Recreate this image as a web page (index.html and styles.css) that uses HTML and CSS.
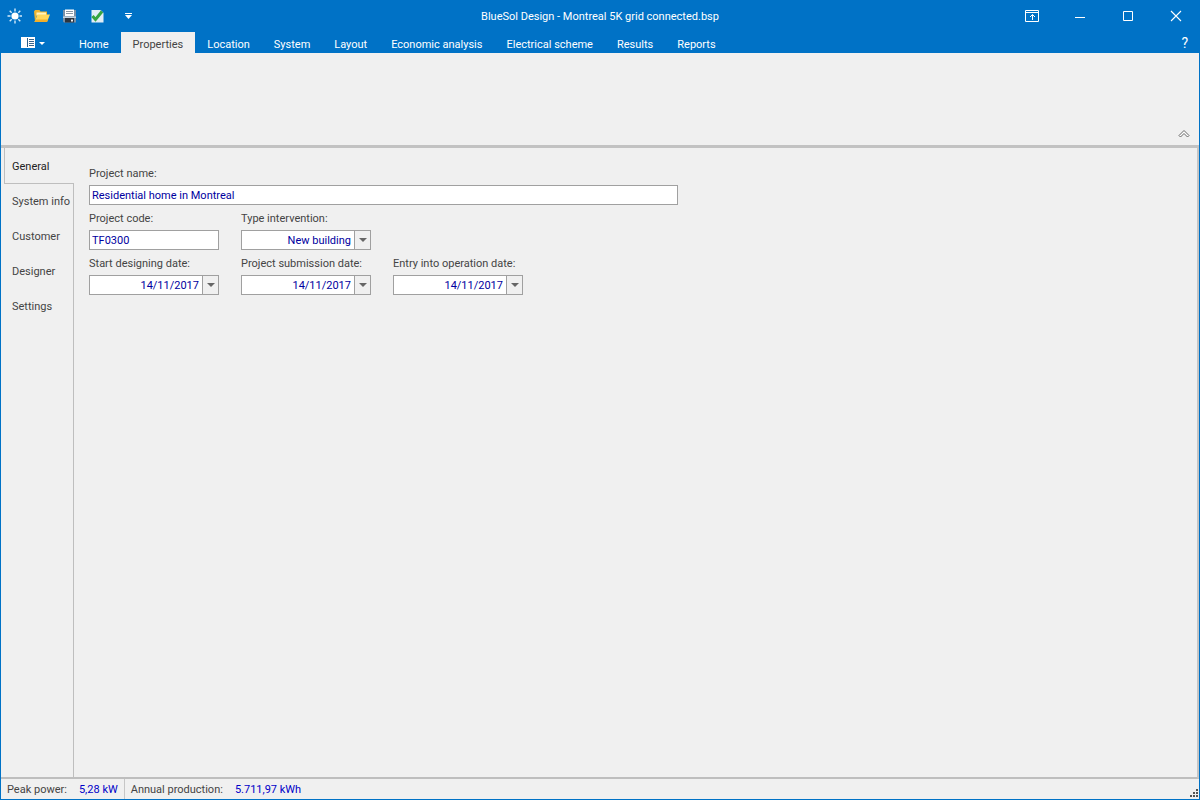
FILE: index.html
```html
<!DOCTYPE html>
<html lang="en">
<head>
    <meta charset="UTF-8">
    <meta name="viewport" content="width=device-width, initial-scale=1.0">
    <title>BlueSol Design - Montreal 5K grid connected.bsp</title>
    <link rel="stylesheet" href="styles.css">
</head>
<body>
    <div class="window">
        <header class="title-bar">
            <div class="quick-access">
                <svg class="icon" viewBox="0 0 16 16" width="16" height="16" aria-hidden="true">
                    <circle cx="9" cy="8" r="3.6" fill="#fff"/>
                    <path d="M9 .5v3M9 12.500v3M1.500 8h3M13.500 8h2.500M3.700 2.700l2 2M12.300 11.300l2 2M3.700 13.300l2-2M12.300 4.700l2-2" stroke="#d3eafa" stroke-width="1.4"/>
                </svg>
                <button class="quick-btn" aria-label="Open">
                    <svg viewBox="0 0 16 16" width="16" height="16">
                        <path d="M0 3.500 1 2h4.500l1 1.500h6.500V7H3L1 13z" fill="#efb52f"/>
                        <path d="M2.500 4.500h9.500v3H2.500z" fill="#fff3c0"/>
                        <path d="M3.500 6.500H16L13 14H.5z" fill="#ffd75a"/>
                        <path d="M.5 14H13l1-2.500H1.500z" fill="#f2ae28"/>
                    </svg>
                </button>
                <button class="quick-btn" aria-label="Save">
                    <svg viewBox="0 0 16 16" width="16" height="16">
                        <path d="M1 2h13v12.500H2l-1-1z" fill="#7890a8"/>
                        <path d="M3 1.500h9V8H3z" fill="#fff"/>
                        <path d="M4 3.500h7M4 5.500h7" stroke="#8796a4"/>
                        <path d="M1 8.500h13v1.500H1z" fill="#c2d2df"/>
                        <path d="M3 10h9v4.500H3z" fill="#2c343e"/>
                        <path d="M9 11.500h2v2H9z" fill="#eee"/>
                    </svg>
                </button>
                <button class="quick-btn" aria-label="Validate">
                    <svg viewBox="0 0 16 16" width="16" height="16">
                        <path d="M1.500 2h9l3 3v9.500h-12z" fill="#e1edf6"/>
                        <path d="M10.500 2v3h3z" fill="#b3c7d7"/>
                        <path d="M2.500 8 5.500 11.500 12 3.500" fill="none" stroke="#36a541" stroke-width="3"/>
                    </svg>
                </button>
                <button class="quick-btn" aria-label="Customize quick access toolbar">
                    <svg viewBox="0 0 16 16" width="16" height="16">
                        <path d="M7 5.500h7" stroke="#fff"/>
                        <path d="M7 7h7l-3.500 4z" fill="#fff"/>
                    </svg>
                </button>
            </div>
            <h1 class="title">BlueSol Design - Montreal 5K grid connected.bsp</h1>
            <div class="window-controls">
                <button class="window-btn" aria-label="Ribbon display options">
                    <svg viewBox="0 0 14 12" width="14" height="12">
                        <path d="M.5.5h13v11H.5zM1 2.500h12M7.500 10V4.500M5 7l2.500-2.500L10 7" fill="none" stroke="#fff"/>
                    </svg>
                </button>
                <button class="window-btn" aria-label="Minimize">
                    <svg viewBox="0 0 12 12" width="12" height="12">
                        <path d="M1 7.500h10" stroke="#fff"/>
                    </svg>
                </button>
                <button class="window-btn" aria-label="Maximize">
                    <svg viewBox="0 0 12 12" width="12" height="12">
                        <path d="M1.500 1.500h9v9h-9z" fill="none" stroke="#fff"/>
                    </svg>
                </button>
                <button class="window-btn" aria-label="Close">
                    <svg viewBox="0 0 12 12" width="12" height="12">
                        <path d="M1 1l10 10M11 1 1 11" stroke="#fff" stroke-width="1.1"/>
                    </svg>
                </button>
            </div>
        </header>

        <nav class="ribbon-tabs">
            <button class="app-menu" aria-label="Application menu">
                <svg viewBox="0 0 24 12" width="24" height="12">
                    <path d="M0 0h14v11H0z" fill="#fff"/>
                    <path d="M6.500 1v9" stroke="#2a5f8c"/>
                    <path d="M8 2.500h5M8 4.500h5M8 6.500h5M8 8.500h5" stroke="#38658c"/>
                    <path d="M18 5h6l-3 3z" fill="#fff"/>
                </svg>
            </button>
            <button class="tab">Home</button>
            <button class="tab active">Properties</button>
            <button class="tab">Location</button>
            <button class="tab">System</button>
            <button class="tab">Layout</button>
            <button class="tab">Economic analysis</button>
            <button class="tab">Electrical scheme</button>
            <button class="tab">Results</button>
            <button class="tab">Reports</button>
            <button class="help-btn">?</button>
        </nav>

        <section class="ribbon">
            <button class="collapse-btn" aria-label="Collapse ribbon">
                <svg viewBox="0 0 12 9" width="12" height="9">
                    <path d="M1 6.500 6 1.500l5 5-1.500 1.500L6 4.500 2.500 8z" fill="#fff" stroke="#666"/>
                </svg>
            </button>
        </section>

        <main class="workspace">
            <nav class="side-tabs">
                <button class="side-tab active">General</button>
                <button class="side-tab">System info</button>
                <button class="side-tab">Customer</button>
                <button class="side-tab">Designer</button>
                <button class="side-tab">Settings</button>
            </nav>
            <form class="form">
                <div class="field field-wide">
                    <label for="project-name">Project name:</label>
                    <input id="project-name" class="box" type="text" value="Residential home in Montreal">
                </div>
                <div class="field">
                    <label for="project-code">Project code:</label>
                    <input id="project-code" class="box" type="text" value="TF0300">
                </div>
                <div class="field">
                    <label for="type-intervention">Type intervention:</label>
                    <div class="box combo">
                        <select id="type-intervention" class="combo-value">
                            <option>New building</option>
                        </select>
                        <span class="combo-arrow"></span>
                    </div>
                </div>
                <div class="field field-first">
                    <label for="start-date">Start designing date:</label>
                    <div class="box combo">
                        <input id="start-date" class="combo-value" type="text" value="14/11/2017">
                        <button type="button" class="combo-arrow" aria-label="Pick start designing date"></button>
                    </div>
                </div>
                <div class="field">
                    <label for="submission-date">Project submission date:</label>
                    <div class="box combo">
                        <input id="submission-date" class="combo-value" type="text" value="14/11/2017">
                        <button type="button" class="combo-arrow" aria-label="Pick project submission date"></button>
                    </div>
                </div>
                <div class="field">
                    <label for="operation-date">Entry into operation date:</label>
                    <div class="box combo">
                        <input id="operation-date" class="combo-value" type="text" value="14/11/2017">
                        <button type="button" class="combo-arrow" aria-label="Pick entry into operation date"></button>
                    </div>
                </div>
            </form>
        </main>

        <footer class="status-bar">
            <div class="status-item">
                <span>Peak power:</span>
                <span class="status-value">5,28 kW</span>
            </div>
            <div class="status-item">
                <span>Annual production:</span>
                <span class="status-value">5.711,97 kWh</span>
            </div>
            <svg class="grip" viewBox="0 0 8 8" width="8" height="8" aria-hidden="true">
                <path d="M6 0h2v2H6zM3 3h2v2H3zM6 3h2v2H6zM0 6h2v2H0zM3 6h2v2H3zM6 6h2v2H6z" fill="#555"/>
            </svg>
        </footer>
    </div>
</body>
</html>
```

FILE: styles.css
```css
* {
    box-sizing: border-box;
}
body {
    margin: 0;
    font-family: Roboto, Tahoma, sans-serif;
    font-size: 11px;
    line-height: 14px;
    color: #444;
}
button,
input,
select {
    font: inherit;
    color: inherit;
    background: none;
    border: none;
    border-radius: 0;
    margin: 0;
    padding: 0;
}
svg {
    display: block;
}
.window {
    display: flex;
    flex-direction: column;
    min-height: 100vh;
    background: #f0f0f0;
    border: 1px solid #0072c6;
    border-top: none;
}

/* Title bar */
.title-bar {
    display: grid;
    grid-template-columns: 1fr auto 1fr;
    align-items: center;
    height: 32px;
    margin: 0 -1px;
    background: #0072c6;
    color: #fff;
}
.quick-access {
    display: flex;
    gap: 12px;
    padding-left: 6px;
}
.title {
    margin: 0;
    padding-top: 2px;
    font-size: 11px;
    font-weight: normal;
}
.window-controls {
    display: flex;
    justify-content: flex-end;
}
.window-btn {
    display: flex;
    align-items: center;
    justify-content: center;
    width: 48px;
    height: 32px;
}

/* Ribbon */
.ribbon-tabs {
    display: flex;
    height: 21px;
    margin: 0 -1px;
    background: #0072c6;
    color: #fff;
}
.app-menu {
    width: 67px;
    padding-left: 21px;
}
.tab {
    padding: 4px 12px 0;
}
.tab.active {
    background: #f0f0f0;
    color: #444;
}
.help-btn {
    margin-left: auto;
    padding: 0 12px;
    font-size: 14px;
}
.ribbon {
    display: flex;
    align-items: flex-end;
    justify-content: flex-end;
    height: 95px;
    padding: 7px 9px;
    border-bottom: 3px solid #c2c2c2;
}

/* Workspace */
.workspace {
    display: flex;
    flex: 1;
    padding-left: 3px;
    border-right: 2px solid #c6c6c6;
    border-bottom: 2px solid #bebebe;
}
.side-tabs {
    display: flex;
    flex-direction: column;
    width: 70px;
    border-right: 1px solid #bebebe;
}
.side-tab {
    height: 35px;
    padding-left: 8px;
    text-align: left;
    white-space: nowrap;
}
.side-tab.active {
    height: 36px;
    margin-right: -1px;
    background: #f0f0f0;
    border-left: 1px solid #bebebe;
    border-bottom: 1px solid #bebebe;
    padding: 2px 0 0 7px;
    color: #222;
}
.form {
    display: grid;
    grid-template-columns: repeat(3, 130px) 1fr;
    align-content: start;
    gap: 7px 22px;
    padding: 19px 15px;
}
.field {
    display: flex;
    flex-direction: column;
    gap: 4px;
    white-space: nowrap;
}
.field-wide {
    grid-column: 1 / -1;
    width: 589px;
    max-width: 100%;
}
.field-first {
    grid-column: 1;
}
.box {
    width: 100%;
    height: 20px;
    padding: 0 2px;
    background: #fff;
    border: 1px solid #a0a0a0;
    color: #0000a0;
}
.combo {
    position: relative;
    display: flex;
    padding: 0;
}
.combo-value {
    flex: 1;
    min-width: 0;
    padding: 1px 3px 0 0;
    text-align: right;
}
select.combo-value {
    appearance: none;
    padding-right: 19px;
    text-align-last: right;
}
.combo-arrow {
    display: flex;
    align-items: center;
    justify-content: center;
    width: 16px;
    background: #f0f0f0;
    border-left: 1px solid #a0a0a0;
}
.combo-arrow::before {
    content: "";
    border: 4px solid transparent;
    border-top-color: #666;
    border-bottom: none;
}
/* the select's arrow lies over it, clicks go through */
select + .combo-arrow {
    position: absolute;
    top: 0;
    right: 0;
    bottom: 0;
    pointer-events: none;
}

/* Status bar */
.status-bar {
    display: flex;
    align-items: stretch;
    height: 20px;
}
.status-item {
    display: flex;
    align-items: center;
    gap: 12px;
    padding: 1px 6px 0;
}
.status-item + .status-item {
    border-left: 1px solid #c6c6c6;
}
.status-value {
    color: #0000c8;
}
.grip {
    align-self: flex-end;
    margin: 0 1px 2px auto;
}
```
